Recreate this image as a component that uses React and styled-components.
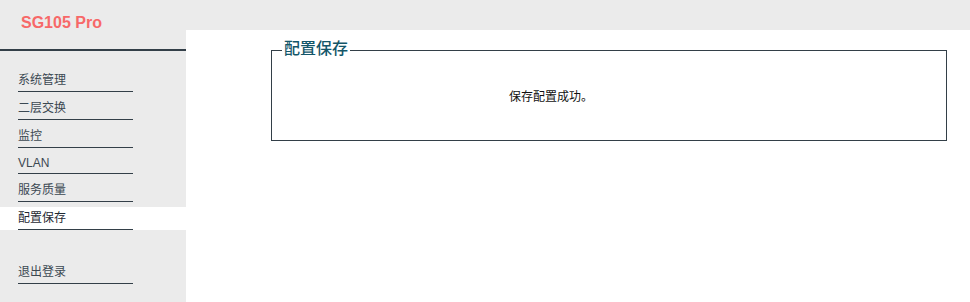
import styled, { createGlobalStyle } from 'styled-components';

const GlobalStyle = createGlobalStyle`
  html, body {
    margin: 0;
    padding: 0;
    background: #ebebeb;
  }
  body {
    font-family: "Liberation Sans", "Noto Sans CJK SC", Arial, sans-serif;
    font-size: 12px;
    color: #333f48;
  }
`;

const Page = styled.div`
  display: grid;
  grid-template-columns: 186px 1fr;
  grid-template-rows: 30px 1fr;
  height: 100vh;
  min-height: 302px;
  background: #ebebeb;
`;

const Sidebar = styled.aside`
  grid-column: 1;
  grid-row: 1 / 3;
  background: #ebebeb;
`;

const Brand = styled.div`
  box-sizing: border-box;
  height: 51px;
  padding: 14px 0 0 21px;
  font-size: 16px;
  font-weight: bold;
  line-height: 18px;
  color: #f76868;
  border-bottom: 2px solid #333f48;
`;

const Nav = styled.nav`
  padding-top: 13px;
`;

const Row = styled.div`
  margin-top: ${props => (props.$gap ? '31px' : '5px')};
  background: ${props => (props.$active ? '#ffffff' : 'transparent')};
`;

const NavLink = styled.a`
  display: block;
  width: 115px;
  margin-left: 18px;
  line-height: ${props => (props.$latin ? '20px' : '22px')};
  border-bottom: 1px solid #333f48;
  color: ${props => (props.$active ? '#1f2a33' : '#3b4852')};
  text-decoration: none;
  cursor: pointer;
`;

const TopBar = styled.div`
  grid-column: 2;
  grid-row: 1;
  background: #ebebeb;
`;

const Main = styled.main`
  grid-column: 2;
  grid-row: 2;
  background: #ffffff;
  padding-top: 9px;
`;

const Panel = styled.fieldset`
  margin: 0 23px 0 85px;
  padding: 0 10px;
  border: 1px solid #333f48;
  min-width: 0;
`;

const Legend = styled.legend`
  padding: 0 2px 3px;
  font-size: 16px;
  font-weight: 500;
  line-height: 20px;
  color: #135669;
`;

const Message = styled.div`
  padding: 27px 0 34px 227px;
  line-height: 17px;
  color: #111;
`;

const items = [
  { label: '系统管理' },
  { label: '二层交换' },
  { label: '监控' },
  { label: 'VLAN', latin: true },
  { label: '服务质量' },
  { label: '配置保存', active: true },
  { label: '退出登录', gap: true },
];

const App = () => {
  return (
    <>
      <GlobalStyle />
      <Page>
        <Sidebar>
          <Brand>SG105 Pro</Brand>
          <Nav>
            {items.map(item => (
              <Row key={item.label} $active={item.active} $gap={item.gap}>
                <NavLink $active={item.active} $latin={item.latin}>
                  {item.label}
                </NavLink>
              </Row>
            ))}
          </Nav>
        </Sidebar>
        <TopBar />
        <Main>
          <Panel>
            <Legend>配置保存</Legend>
            <Message>保存配置成功。</Message>
          </Panel>
        </Main>
      </Page>
    </>
  );
};

export default App;
